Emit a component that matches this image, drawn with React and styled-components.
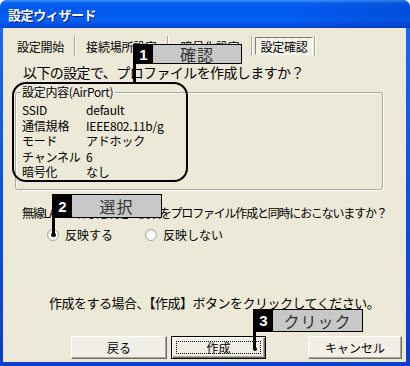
import styled, { createGlobalStyle } from "styled-components";

const GlobalStyle = createGlobalStyle`
  html, body {
    margin: 0;
    padding: 0;
    background: #fff;
  }
  body {
    font-family: "Noto Sans CJK JP", "Noto Sans", sans-serif;
    color: #000;
  }
`;

const tabs = [
  { label: "設定開始", width: 65 },
  { label: "接続場所設定", width: 89 },
  { label: "暗号化設定", width: 80 },
  { label: "設定確認", width: 58, active: true },
];

const settings = [
  ["SSID", "default"],
  ["通信規格", "IEEE802.11b/g"],
  ["モード", "アドホック"],
  ["チャンネル", "6"],
  ["暗号化", "なし"],
];

const Callout = ({ num, label, x, y, w, h, line, dot }) => (
  <CalloutBox $x={x} $y={y} $w={w} $h={h} $line={line} $dot={dot}>
    <Num>{num}</Num>
    <Label>{label}</Label>
  </CalloutBox>
);

const App = () => {
  return (
    <>
      <GlobalStyle />
      <Window>
        <TitleBar>
          <Title>設定ウィザード</Title>
        </TitleBar>

        <Frame>
          <TabBar>
            {tabs.map((t, i) => (
              <TabGroup key={t.label}>
                {i > 0 && <Sep $gap={i === 3 ? 2 : 1} />}
                <Tab $width={t.width} $active={t.active}>{t.label}</Tab>
              </TabGroup>
            ))}
            <Sep $gap={8} />
          </TabBar>

          <Intro>以下の設定で、プロファイルを作成しますか？</Intro>

          <Group>
            <Legend>設定内容(AirPort)</Legend>
            {settings.map(([k, v]) => (
              <Row key={k}>
                <span>{k}</span>
                <span>{v}</span>
              </Row>
            ))}
          </Group>

          <Question>無線LANの暗号化設定の反映をプロファイル作成と同時におこないますか？</Question>

          <RadioRow>
            <RadioItem>
              <Radio $checked />
              反映する
            </RadioItem>
            <RadioItem>
              <Radio />
              反映しない
            </RadioItem>
          </RadioRow>

          <Hint>作成をする場合、【作成】ボタンをクリックしてください。</Hint>

          <Buttons>
            <Button $w={96}>戻る</Button>
            <Button $w={95} $default>
              <Focus>作成</Focus>
            </Button>
            <Button $w={94} $push>キャンセル</Button>
          </Buttons>

          <Marker />
          <Callout num="1" label="確認" x={130} y={16} w={109} h={20} line={19} />
          <Callout num="2" label="選択" x={49} y={166} w={110} h={24} line={18} dot />
          <Callout num="3" label="クリック" x={250} y={281} w={110} h={23} line={18} dot />
        </Frame>
      </Window>
    </>
  );
};

export default App;

const Window = styled.div`
  width: 410px;
  height: 366px;
  display: flex;
  flex-direction: column;
  background: linear-gradient(to bottom, #1a6cf0, #0b4fdc 60%, #0a3fc8);
  border-radius: 7px 7px 0 0;
  overflow: hidden;
`;

const TitleBar = styled.div`
  flex: none;
  height: 28px;
  display: flex;
  align-items: center;
  padding: 0 8px;
  background:
    linear-gradient(to right, rgba(0, 0, 0, 0) 70%, rgba(0, 20, 120, 0.18) 100%),
    linear-gradient(to bottom, #3d95ff 0, #0a62f0 3px, #0058ee 35%, #0560f2 70%, #0250e4 90%, #003dd0 100%);
`;

const Title = styled.div`
  color: #fff;
  font-size: 13px;
  font-weight: bold;
  letter-spacing: -0.4px;
  text-shadow: 1px 1px 0 #0a1883;
`;

const Frame = styled.div`
  flex: 1;
  margin: 0 4px 4px 3px;
  background: #ece9d8;
  position: relative;
  display: flex;
  flex-direction: column;
`;

const TabBar = styled.div`
  display: flex;
  align-items: center;
  height: 20px;
  margin-top: 8px;
  padding-left: 5px;
`;

const TabGroup = styled.div`
  display: flex;
  align-items: center;
  height: 100%;
`;

const Sep = styled.div`
  width: 0;
  height: 20px;
  border-left: 1px solid #aca899;
  border-right: 1px solid #fff;
  margin: 0 ${(p) => p.$gap}px 0 1px;
`;

const Tab = styled.div`
  box-sizing: border-box;
  width: ${(p) => p.$width}px;
  height: ${(p) => (p.$active ? "18px" : "20px")};
  display: flex;
  align-items: center;
  justify-content: center;
  font-size: 12px;
  letter-spacing: -0.2px;
  ${(p) =>
    p.$active &&
    `
    border: 1px solid;
    border-color: #808080 #fff #fff #808080;
    background: repeating-conic-gradient(#fff 0 25%, #ece9d8 0 50%) 0 0 / 2px 2px;
  `}
`;

const Intro = styled.div`
  margin: 8px 0 0 20px;
  font-size: 14px;
  line-height: 16px;
  letter-spacing: -0.6px;
`;

const Group = styled.fieldset`
  margin: 5px 23px 0 12px;
  padding: 3px 0 9px 6px;
  min-width: 0;
  border: 1px solid #aca899;
  border-radius: 3px;
  box-shadow: inset 1px 1px 0 #fff, 1px 1px 0 #fff;
`;

const Legend = styled.legend`
  padding: 0 1px;
  margin-left: -1px;
  font-size: 12px;
  line-height: 14px;
  letter-spacing: -0.3px;
`;

const Row = styled.div`
  display: grid;
  grid-template-columns: 64px 1fr;
  font-size: 12px;
  line-height: 15.5px;
  letter-spacing: -0.2px;
`;

const Question = styled.div`
  margin: 15px 0 0 19px;
  font-size: 12px;
  line-height: 16px;
  letter-spacing: -1.2px;
  white-space: nowrap;
`;

const RadioRow = styled.div`
  display: flex;
  gap: 32px;
  margin: 6px 0 0 44px;
  height: 16px;
`;

const RadioItem = styled.label`
  display: flex;
  align-items: center;
  gap: 6px;
  font-size: 12px;
  line-height: 16px;
`;

const Radio = styled.span`
  box-sizing: border-box;
  width: 12px;
  height: 12px;
  border-radius: 50%;
  border: 1px solid #a4a4a4;
  background: radial-gradient(circle at 65% 65%, #fff 40%, #dcdcd4 100%);
  position: relative;
  &::after {
    content: "";
    display: ${(p) => (p.$checked ? "block" : "none")};
    position: absolute;
    left: 3px;
    top: 3px;
    width: 4px;
    height: 4px;
    border-radius: 50%;
    background: #000;
  }
`;

const Hint = styled.div`
  margin: 52px 0 0 46px;
  font-size: 13px;
  line-height: 16px;
  letter-spacing: -0.5px;
  white-space: nowrap;
`;

const Buttons = styled.div`
  display: flex;
  gap: 4px;
  margin: 25px 0 0 68px;
`;

const Button = styled.div`
  box-sizing: border-box;
  width: ${(p) => p.$w}px;
  height: 23px;
  margin-left: ${(p) => (p.$push ? "38px" : "0")};
  display: flex;
  align-items: center;
  justify-content: center;
  font-size: 12px;
  background: #f1efe6;
  border: 1px solid;
  border-color: #fff #716f64 #716f64 #fff;
  box-shadow: inset -1px -1px 0 #aca899;
  ${(p) =>
    p.$default &&
    `
    border: 1px solid #000;
    box-shadow: inset 1px 1px 0 #fff, inset -1px -1px 0 #716f64, inset -2px -2px 0 #aca899;
  `}
`;

const Focus = styled.div`
  box-sizing: border-box;
  width: calc(100% - 8px);
  height: calc(100% - 8px);
  border: 1px dotted #000;
  display: flex;
  align-items: center;
  justify-content: center;
`;

const Marker = styled.div`
  position: absolute;
  left: 9px;
  top: 54px;
  width: 176px;
  height: 100px;
  box-sizing: border-box;
  border: 2.5px solid #000;
  border-radius: 14px;
`;

const CalloutBox = styled.div`
  position: absolute;
  left: ${(p) => p.$x}px;
  top: ${(p) => p.$y}px;
  width: ${(p) => p.$w}px;
  height: ${(p) => p.$h}px;
  box-sizing: border-box;
  display: flex;
  border: 1px solid #000;
  background: #c8c8c8;

  &::before {
    content: "";
    position: absolute;
    left: -1px;
    top: 100%;
    width: 3px;
    height: ${(p) => p.$line}px;
    background: #000;
  }
  &::after {
    content: "";
    display: ${(p) => (p.$dot ? "block" : "none")};
    position: absolute;
    left: -1.5px;
    top: calc(100% + ${(p) => p.$line - 2}px);
    width: 4px;
    height: 4px;
    border-radius: 50%;
    background: #000;
  }
`;

const Num = styled.div`
  width: 19px;
  background: #000;
  color: #fff;
  font-family: "Liberation Sans", "Noto Sans", sans-serif;
  font-weight: bold;
  font-size: 15px;
  display: flex;
  align-items: center;
  justify-content: center;
`;

const Label = styled.div`
  flex: 1;
  display: flex;
  align-items: center;
  justify-content: center;
  color: #333;
  font-size: 16px;
  letter-spacing: 1px;
`;
